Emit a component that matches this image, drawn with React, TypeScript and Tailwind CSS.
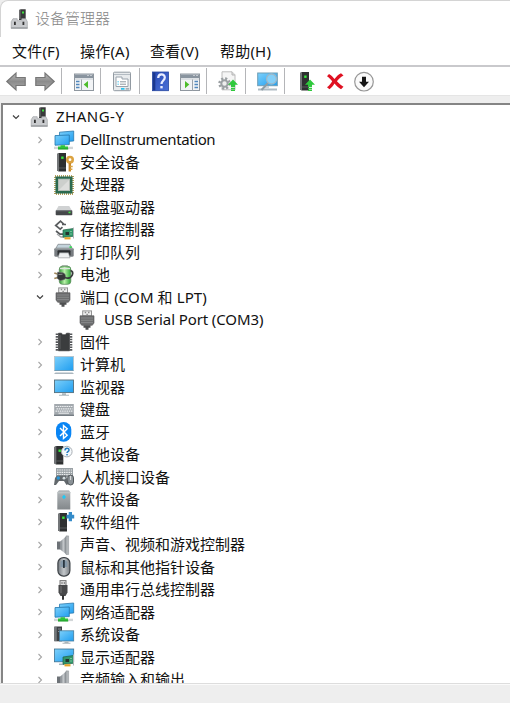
import React from "react";

function Svg({ children, w = 20, h = 20 }: { children: React.ReactNode; w?: number; h?: number }) {
  return (
    <svg width={w} height={h} viewBox={`0 0 ${w} ${h}`} className="block shrink-0 overflow-visible">
      {children}
    </svg>
  );
}

function Gradients() {
  return (
    <svg width="0" height="0" className="absolute">
      <defs>
        <linearGradient id="screen" x1="0" y1="0" x2="1" y2="1">
          <stop offset="0" stopColor="#7dd0fa" />
          <stop offset="1" stopColor="#1e9df0" />
        </linearGradient>
        <linearGradient id="metal" x1="0" y1="0" x2="0" y2="1">
          <stop offset="0" stopColor="#b3b8bb" />
          <stop offset="1" stopColor="#83888b" />
        </linearGradient>
        <linearGradient id="arrow" x1="0" y1="0" x2="0" y2="1">
          <stop offset="0" stopColor="#b9b9b9" />
          <stop offset="0.5" stopColor="#8c8c8c" />
          <stop offset="1" stopColor="#a9a9a9" />
        </linearGradient>
        <linearGradient id="side" x1="0" y1="0" x2="1" y2="0">
          <stop offset="0" stopColor="#747a80" />
          <stop offset="0.5" stopColor="#c4c8cb" />
          <stop offset="1" stopColor="#7b8085" />
        </linearGradient>
        <linearGradient id="cell" x1="0" y1="0" x2="1" y2="0">
          <stop offset="0" stopColor="#2f9a35" />
          <stop offset="0.45" stopColor="#b9f0a8" />
          <stop offset="1" stopColor="#2ba534" />
        </linearGradient>
        <linearGradient id="blue" x1="0" y1="0" x2="1" y2="1">
          <stop offset="0" stopColor="#2749b4" />
          <stop offset="1" stopColor="#4a70d6" />
        </linearGradient>
      </defs>
    </svg>
  );
}

const Root = () => (
  <Svg>
    <path d="M9 1l2-.7h4.700V11H9z" fill="#38393a" />
    <path d="M9 1l1.600-.6V10H9z" fill="#6b6c6d" />
    <rect x="12" y="2.500" width="2" height="2" fill="#3ee03e" />
    <path d="M3 9.700h4.200v2h4.600v-2h4l1.500 3v6.800H1.200v-6.800z" fill="#c9cbce" stroke="#a0a3a6" strokeWidth=".7" />
    <path d="M1 18h16.500v1.600H1z" fill="#a4a7aa" />
    <rect x="4" y="12.700" width="1.800" height="3.300" fill="#333" />
    <rect x="12.500" y="12.700" width="1.800" height="3.300" fill="#333" />
  </Svg>
);

const Network = () => (
  <Svg>
    <path d="M5.500 2.200L19.700 1v10L5.500 12z" fill="url(#screen)" stroke="#2b79ac" strokeWidth=".8" />
    <path d="M1 5.600L15.300 5v9.600L1 15.200z" fill="url(#screen)" stroke="#2275ab" strokeWidth=".8" />
    <path d="M0 16.700h19v2.400H0z" fill="#d2d6d8" />
    <path d="M6.500 15.200h4.500v1.300h3v2.800H4v-2.800h2.500z" fill="#2ec43b" />
    <path d="M4 18.400h10.300v1H4z" fill="#229b2d" />
  </Svg>
);

const Tower = ({ x = 0 }: { x?: number }) => (
  <g transform={`translate(${x} 0)`}>
    <path d="M0 2l2-1h7v18.500H2L0 18.500z" fill="#2e3031" />
    <path d="M0 2l2-1v18.500l-2-1z" fill="#737678" />
    <rect x="4.200" y="4.500" width="2.400" height="2.400" fill="#38e83e" />
    <path d="M2 16h7" stroke="#626567" strokeWidth=".8" />
  </g>
);

const Security = () => (
  <Svg>
    <Tower x={3} />
    <circle cx="16" cy="7.700" r="2.700" fill="none" stroke="#dca341" strokeWidth="2.600" />
    <path d="M15.800 11v8.500" stroke="#c98a2b" strokeWidth="2.400" />
    <path d="M16 14.500h2.700M16 17.300h2.400" stroke="#dca341" strokeWidth="1.500" />
  </Svg>
);

const Cpu = () => (
  <Svg>
    <rect x="1" y="1" width="18" height="18" fill="none" stroke="#b39f5c" strokeWidth="2" strokeDasharray="1 1" />
    <rect x="1.500" y="1.500" width="17" height="17" fill="#2b6a50" />
    <rect x="4.500" y="4.200" width="11" height="11.300" fill="#dddedc" stroke="#b3bcb5" />
    <path d="M5 15V4.700h10.300z" fill="#cccfcc" />
  </Svg>
);

const Disk = () => (
  <Svg>
    <path d="M4.500 9h10.700l3 5H1.700z" fill="#d0d2d3" />
    <rect x="1.700" y="13.200" width="16.600" height="5" rx=".8" fill="#45484a" />
    <path d="M2 13.700h16" stroke="#777b7e" />
    <rect x="14.500" y="14.700" width="2" height="1.500" fill="#43ed45" />
  </Svg>
);

const Card = () => (
  <g>
    <path d="M9 10l10.500-1.500v7.800L9 17.300z" fill="#32966a" stroke="#1d6042" strokeWidth=".7" />
    <path d="M11.500 12h3.500v3h-3.500z" fill="#24342d" />
    <path d="M16 11.500h2M16 14h2" stroke="#75c198" />
    <path d="M10.500 17.200h6v2.200h-6z" fill="#e5a52c" />
    <path d="M19.500 7.500v11" stroke="#b1b6b8" />
  </g>
);

const Storage = () => (
  <Svg>
    <path d="M10 4.300L6.500 1.200 1.700 5.500l4.500 3.700L8.500 7.200M8 4.500h4" fill="none" stroke="#5a5d5f" strokeWidth="1.700" />
    <path d="M2 11l4 3.200h3" fill="none" stroke="#55585a" strokeWidth="1.700" />
    <path d="M3 14l4 3H9" fill="none" stroke="#a2a5a7" strokeWidth="1.300" />
    <Card />
  </Svg>
);

const Printer = () => (
  <Svg>
    <path d="M4 2.300h12l2.300 4.500H1.700z" fill="#c3d3db" stroke="#858c90" strokeWidth=".8" />
    <rect x=".3" y="5.800" width="19.400" height="9" rx="1.500" fill="#777c80" />
    <path d="M1 6.800h18" stroke="#a9aeb1" />
    <rect x="3.500" y="8.300" width="13" height="5.500" rx="1" fill="#2b2e30" />
    <path d="M5.500 10.800h9l1.500 5H4z" fill="#eff1f2" stroke="#898e91" strokeWidth=".6" />
    <rect x="15.500" y="4.300" width="2.300" height="1.700" fill="#34df51" />
  </Svg>
);

const Battery = () => (
  <Svg>
    <rect x="7.500" y="0" width="6.500" height="3" rx="1" fill="#b7bdb9" />
    <rect x="5.300" y="1.300" width="11.500" height="18" rx="3" fill="url(#cell)" stroke="#5d8a5d" strokeWidth=".8" />
    <path d="M6 3.500h10" stroke="#dbe5da" strokeWidth="1.500" />
    <path d="M.3 8l4 1.300M.3 13.500l3.700-1" stroke="#a0865a" strokeWidth="1.700" />
    <path d="M3.500 7l5 .6c3.200 1 4 4 2.200 6.900l-4.500 1.200-3.200-2.500z" fill="#353838" stroke="#868c87" strokeWidth=".5" />
    <path d="M4.500 9.500l4-.3" stroke="#8d928f" strokeWidth="1" />
    <path d="M11 12.500c4 1.500 6.500-.5 7.300-2.500 1-2.500 0-4-1.800-4.500" fill="none" stroke="#383b3b" strokeWidth="1.800" />
  </Svg>
);

const Port = () => (
  <Svg>
    <rect x="4.700" y=".9" width="8.800" height="5" fill="#eee" stroke="#929292" />
    <path d="M6.700 2.500h1.500M10 2.500h1.500M8.400 4.300h1.500" stroke="#8d8d8d" strokeWidth="1.300" />
    <path d="M2 5.800h14v7.200l-1.700 2.300H3.700L2 13z" fill="#6c6d6e" stroke="#555657" strokeWidth=".6" />
    <path d="M3 8h12M3 10.300h12M3 12.600h12" stroke="#8a8b8c" strokeWidth=".9" />
    <path d="M5.500 15.300h7v2.400h-2v2h-3v-2h-2z" fill="#4e4f50" />
  </Svg>
);

const Firmware = () => (
  <Svg>
    <path d="M4.500 1.200h3c.5 2 4.500 2 5 0h3v17.600h-11z" fill="#3b3d3e" stroke="#252728" strokeWidth=".6" />
    <path d="M6 3v14" stroke="#5c5e5f" />
    <path d="M3 1.500v17.500M17 1.500v17.500" stroke="#55575a" strokeWidth="2.600" strokeDasharray="1.600 1" />
  </Svg>
);

const Computer = () => (
  <Svg>
    <rect x=".4" y="1.400" width="19.200" height="14" fill="url(#screen)" stroke="#b7c2c8" strokeWidth=".8" />
    <path d="M.5 15.500h19" stroke="#5a90b0" strokeWidth=".8" />
    <path d="M1.500 17.600h17l1.500 1.400H0z" fill="#aab6be" />
  </Svg>
);

const Monitor = () => (
  <Svg>
    <rect x=".5" y="3" width="19" height="12.600" fill="url(#screen)" stroke="#536f7d" strokeWidth=".9" />
    <path d="M8 16.200h4v1.500h3v1H5v-1h3z" fill="#aab7bd" />
  </Svg>
);

const Keyboard = () => (
  <Svg>
    <rect x=".2" y="4" width="19.600" height="12" fill="#a3a9ae" />
    <path d="M1.500 6.500h17M2.500 8.800h16M1.500 11.100h17" stroke="#eceef0" strokeWidth="1.200" strokeDasharray="1.500 .7" />
    <path d="M4.500 13.200h10.500" stroke="#e6e9ea" strokeWidth="1.100" />
    <path d="M0 15.300h20" stroke="#737b82" strokeWidth="1.300" />
  </Svg>
);

const Bluetooth = () => (
  <Svg>
    <rect x="2" y="0" width="15.300" height="19.700" rx="7.600" fill="#0985f4" />
    <path d="M6 6l7.200 7.300-3.700 3.200v-13l3.700 3.200L6 13.900" fill="none" stroke="#fff" strokeWidth="1.400" />
  </Svg>
);

const Other = () => (
  <Svg>
    <Tower x={0.3} />
    <circle cx="12.800" cy="6.600" r="5.300" fill="#f5f9fc" stroke="#a9afb4" />
    <path d="M11 5.500c0-3 4-2.800 4-.5 0 1.700-2 1.700-2 3.100" fill="none" stroke="#247cbf" strokeWidth="1.500" />
    <rect x="12.300" y="9" width="1.500" height="1.400" fill="#247cbf" />
  </Svg>
);

const Hid = () => (
  <Svg>
    <rect x="2" y="1" width="17" height="9" fill="#9aa1a5" />
    <path d="M3 3h15M3 5.300h15M3 7.500h15" stroke="#eceeef" strokeWidth="1.200" strokeDasharray="1.500 .8" />
    <path d="M3 8.500h9l2.500 8.500-2 1-2.500-4H5l-3 4H0l1-7z" fill="#62686c" />
    <circle cx="4.300" cy="11" r="1.700" fill="#2c96d6" />
    <circle cx="10" cy="11.200" r="1.400" fill="#d4dde1" />
    <rect x="13.700" y="8" width="5.800" height="10" rx="2.900" fill="#8a9196" stroke="#51575a" />
    <path d="M16.600 9v4" stroke="#e3e3e3" />
  </Svg>
);

const Software = () => (
  <Svg>
    <path d="M5 .3h10l1.300 2v17.200h-13V2.300z" fill="url(#metal)" />
    <path d="M3.500 2.800h13" stroke="#d0d4d6" strokeWidth=".7" />
    <path d="M10 4.800l2 2.200-2 2.200L8 7z" fill="#20c8f4" />
  </Svg>
);

const Component = () => (
  <Svg>
    <Tower x={4} />
    <path d="M12.500 2.800h2.200V0H18v2.800h2.200v3.700H18v2.700h-3.300V6.500h-2.200z" fill="#348bc9" />
  </Svg>
);

const Speaker = () => (
  <Svg>
    <path d="M3 6.500h3.200v8H3z" fill="#6d7277" />
    <path d="M6.200 6.500L12.500 1v18.500l-6.300-5z" fill="url(#side)" />
    <path d="M12 .9h2.600v18.600H12z" fill="#b2b6b9" stroke="#868c90" strokeWidth=".5" />
  </Svg>
);

const Mouse = () => (
  <Svg>
    <rect x="3.900" y=".6" width="12" height="18.500" rx="5.500" fill="url(#side)" stroke="#3d4247" strokeWidth="1.200" />
    <path d="M6.500 10V5.500C6.500 2 13.300 2 13.300 5.500V10z" fill="#8497a7" />
    <path d="M9.900 3v8" stroke="#26323b" strokeWidth="1.700" />
  </Svg>
);

const Usb = () => (
  <Svg>
    <rect x="6" y=".6" width="6" height="5" fill="#dedede" stroke="#777" />
    <path d="M8 2v2M10.300 2v2" stroke="#777" />
    <path d="M4.500 5h9v7.500L11.500 16h-5l-2-3.500z" fill="#48494a" />
    <path d="M7 6v7" stroke="#777" />
    <path d="M9 15v4.800" stroke="#353637" strokeWidth="2" />
  </Svg>
);

const System = () => (
  <Svg>
    <path d="M.3 1.500h7.700v14.800H.3z" fill="#3d4144" />
    <path d="M.5 2h2.300v14H.5z" fill="#73787b" />
    <path d="M4 4h3M4 6.500h3" stroke="#878d91" />
    <rect x="5.500" y="5.800" width="14.200" height="10.200" fill="url(#screen)" stroke="#477c9c" strokeWidth=".8" />
    <path d="M10.500 16.500h4v1.200h2v1H8.500v-1h2z" fill="#aab5ba" />
  </Svg>
);

const Display = () => (
  <Svg>
    <rect x=".5" y="2" width="19.200" height="12.800" fill="url(#screen)" stroke="#3d718f" strokeWidth=".8" />
    <path d="M5 17.300h5" stroke="#a3b3bb" strokeWidth="1.500" />
    <Card />
  </Svg>
);

type Device = { label: string; icon: () => React.JSX.Element; open?: boolean; child?: boolean; tracking?: string };

const devices: Device[] = [
  { label: "DellInstrumentation", icon: Network, tracking: "tracking-[-0.4px]" },
  { label: "安全设备", icon: Security },
  { label: "处理器", icon: Cpu },
  { label: "磁盘驱动器", icon: Disk },
  { label: "存储控制器", icon: Storage },
  { label: "打印队列", icon: Printer },
  { label: "电池", icon: Battery },
  { label: "端口 (COM 和 LPT)", icon: Port, open: true, tracking: "tracking-[0.1px]" },
  { label: "USB Serial Port (COM3)", icon: Port, child: true, tracking: "tracking-[-0.1px]" },
  { label: "固件", icon: Firmware },
  { label: "计算机", icon: Computer },
  { label: "监视器", icon: Monitor },
  { label: "键盘", icon: Keyboard },
  { label: "蓝牙", icon: Bluetooth },
  { label: "其他设备", icon: Other },
  { label: "人机接口设备", icon: Hid },
  { label: "软件设备", icon: Software },
  { label: "软件组件", icon: Component },
  { label: "声音、视频和游戏控制器", icon: Speaker },
  { label: "鼠标和其他指针设备", icon: Mouse },
  { label: "通用串行总线控制器", icon: Usb },
  { label: "网络适配器", icon: Network },
  { label: "系统设备", icon: System },
  { label: "显示适配器", icon: Display },
  { label: "音频输入和输出", icon: Speaker },
];

function Chevron({ open }: { open?: boolean }) {
  return (
    <Svg w={8} h={8}>
      {open ? (
        <path d="M1 2.500l3 3 3-3" fill="none" stroke="#404040" strokeWidth="1.200" />
      ) : (
        <path d="M2.500 1l3 3-3 3" fill="none" stroke="#a6a6a6" strokeWidth="1.100" />
      )}
    </Svg>
  );
}

function Row({ device }: { device: Device }) {
  const Icon = device.icon;
  return (
    <li className={`flex h-[22.5px] shrink-0 items-center ${device.child ? "pl-[57px]" : "pl-[33px]"}`}>
      <span className="w-[18px] shrink-0">{!device.child && <Chevron open={device.open} />}</span>
      <Icon />
      <span className={`ml-[6px] pb-[1.5px] leading-5 whitespace-nowrap ${device.tracking ?? ""}`}>{device.label}</span>
    </li>
  );
}

const Separator = ({ className }: { className: string }) => <div className={`h-[26px] w-px shrink-0 bg-[#b4b5b8] ${className}`} />;

const Arrow = ({ right }: { right?: boolean }) => (
  <Svg>
    <path
      transform={right ? "translate(20 0) scale(-1 1)" : undefined}
      d="M.8 10.500L10 2v4.500h9.200v8H10V19z"
      fill="url(#arrow)"
      stroke="#777"
      strokeWidth="1.200"
    />
  </Svg>
);

const Panel = ({ right }: { right?: boolean }) => (
  <Svg>
    <rect x=".5" y="3" width="19" height="16.500" fill="#f2f4f6" stroke="#8f979f" />
    <path d="M1 3.500h18V7H1z" fill="#89949f" />
    <path d="M13.500 4.500h1M16.500 4.500h1" stroke="#fff" />
    <path d="M1 8h18" stroke="#c6ccd2" />
    <path d={right ? "M12.500 8.500v11" : "M7.500 8.500v11"} stroke="#9da5ac" />
    <path d={right ? "M14.500 10.500h3.500M14.500 13.500h3.500M14.500 16.500h3.500" : "M2 10.500h3.500M2 13.500h3.500M2 16.500h3.500"} stroke="#5187bd" strokeWidth="1.400" />
    <path d={right ? "M5 10l4.300 3.600L5 17.200z" : "M14 10l-4.300 3.600 4.300 3.600z"} fill="#4ebd2c" />
  </Svg>
);

const Properties = () => (
  <Svg>
    <rect x="1.500" y="1.200" width="17" height="18.500" rx="1" fill="#e8ebed" stroke="#929aa2" />
    <path d="M2 3.500h16" stroke="#b4bcc3" />
    <path d="M4 6h6v2h6v7.500H4z" fill="#fff" stroke="#9aa3ac" />
    <path d="M8 10.800h6M8 13.200h6" stroke="#8e979e" />
    <path d="M5.500 10.800h1.300M5.500 13.200h1.300" stroke="#34bce9" />
    <rect x="9" y="17" width="3.500" height="1.700" fill="#28c2ef" />
    <rect x="13.700" y="17" width="3.500" height="1.700" fill="#a7afb6" />
  </Svg>
);

const Help = () => (
  <Svg>
    <rect x="1.500" y="1" width="16" height="18.700" fill="url(#blue)" stroke="#2546a0" strokeWidth=".8" />
    <path d="M2 1.500h2.300v17.800H2z" fill="#1b388e" />
    <path d="M7.200 7c0-4.800 6.600-4.500 6.600-.5 0 3-3.300 3-3.300 6.500" fill="none" stroke="#e9edff" strokeWidth="2.200" />
    <rect x="9.300" y="15" width="2.400" height="2.400" fill="#e9edff" />
  </Svg>
);

const Up = () => <path d="M15 8.500l5 5.200h-3V16h-4v-2.300h-3zM13 16.700h4v1.200h-4zM13 18.600h4v1.300h-4z" fill="#2fc83c" />;

const Update = () => (
  <Svg>
    <path d="M4 .8h10l3 3v15H4z" fill="#f5f5f5" stroke="#bcbcbc" />
    <path d="M14 .8v3.200h3" fill="#ddd" stroke="#b5b5b5" />
    <circle cx="6.500" cy="12.500" r="5" fill="none" stroke="#9ba0a3" strokeWidth="2.500" strokeDasharray="2.100 1.830" />
    <circle cx="6.500" cy="12.500" r="3.200" fill="#eee" stroke="#9ba0a3" strokeWidth="2" />
    <Up />
  </Svg>
);

const Scan = () => (
  <Svg w={22}>
    <rect x=".7" y="2" width="19.600" height="12.700" fill="url(#screen)" stroke="#6e9db5" />
    <path d="M1 18.500h19" stroke="#aebbc3" strokeWidth="2" />
    <path d="M8 15h4v2.500H8z" fill="#c9d3d9" />
    <path d="M11 12L4.500 19" stroke="#8e9ca4" strokeWidth="2" />
    <circle cx="14.500" cy="8" r="5" fill="#83cff8" stroke="#9cb8c8" strokeWidth="1.300" />
  </Svg>
);

const Enable = () => (
  <Svg>
    <Tower x={2} />
    <g transform="translate(-3 0)">
      <Up />
    </g>
  </Svg>
);

const Remove = () => (
  <Svg>
    <path d="M3 3c3 1.500 4 3.300 5.500 5C10.500 5.500 12.500 3.500 15 2.300l2.500 2.200c-3 1.600-5 3.500-6.600 5.800 2 2.300 4 4 6.600 5.500L15 18.200c-2.500-1.500-4.500-3.300-6.500-5.700-1.500 2.500-3 4.300-5 5.700L1 16.300c2.300-1.800 3.700-3.600 5.200-6C4.500 8.300 3 6.500 1 5.300z" fill="#df1122" />
  </Svg>
);

const Down = () => (
  <Svg>
    <circle cx="10" cy="10.700" r="9.300" fill="#fafafa" stroke="#979797" strokeWidth="1.200" />
    <path d="M8 5.700h4v5h3l-5 5.500-5-5.500h3z" fill="#151515" />
  </Svg>
);

export default function App() {
  return (
    <main className="flex h-[703px] w-[510px] flex-col overflow-hidden bg-[#eeeeee] font-['Noto_Sans','Noto_Sans_CJK_SC',sans-serif] text-[15px] text-[#111]">
      <Gradients />
      <header className="flex h-[37px] shrink-0 items-center rounded-tl-[8px] border-t border-l border-[#d4d4d4] bg-white pb-px pl-[9px]">
        <Root />
        <h1 className="ml-[5px] pb-[2px] leading-5 font-light text-[#858585]">设备管理器</h1>
      </header>
      <nav className="flex h-7 shrink-0 items-center bg-white tracking-[0.2px] whitespace-nowrap">
        <button className="ml-3 w-[68px] text-left">文件(F)</button>
        <button className="w-[70px] text-left">操作(A)</button>
        <button className="w-[70px] text-left">查看(V)</button>
        <button className="text-left">帮助(H)</button>
      </nav>
      <div className="flex h-[31px] shrink-0 items-center border-t-2 border-b border-t-[#c9c9cc] border-b-[#e5e5e5] bg-white pl-[6px]">
        <Arrow />
        <div className="w-[9px]" />
        <Arrow right />
        <Separator className="mr-3 ml-[6px]" />
        <Panel />
        <Separator className="mr-[11px] ml-[6px]" />
        <Properties />
        <Separator className="mr-[11px] ml-[7px]" />
        <Help />
        <div className="w-[9px]" />
        <Panel right />
        <Separator className="mr-[11px] ml-[6px]" />
        <Update />
        <Separator className="mr-[11px] ml-[7px]" />
        <Scan />
        <Separator className="mr-[13px] ml-[5px]" />
        <Enable />
        <div className="w-2" />
        <Remove />
        <div className="w-2" />
        <Down />
      </div>
      <section className="mt-[7px] ml-px flex h-[580px] shrink-0 flex-col overflow-hidden border-t-2 border-l-2 border-[#858585] bg-white">
        <div className="flex h-[23.5px] shrink-0 items-center pl-[9px]">
          <span className="w-[18px]">
            <Chevron open />
          </span>
          <Root />
          <span className="ml-[6px] pb-px tracking-[0.5px]">ZHANG-Y</span>
        </div>
        <ul className="flex flex-col">
          {devices.map((device) => (
            <Row key={device.label} device={device} />
          ))}
        </ul>
      </section>
      <footer className="h-[20px] shrink-0 border-t border-[#dddddd] bg-[#eeeeee] shadow-[inset_0_1px_0_#fafafa]" />
    </main>
  );
}
